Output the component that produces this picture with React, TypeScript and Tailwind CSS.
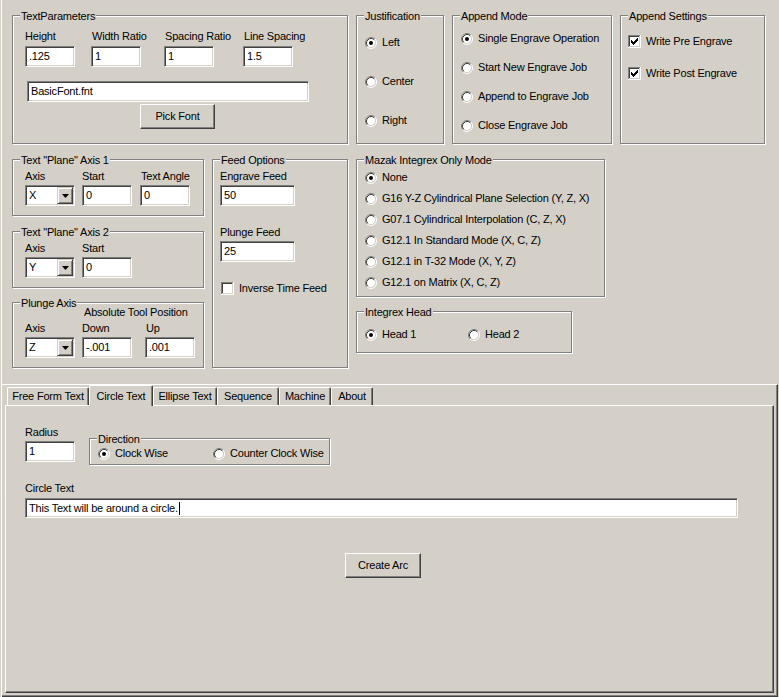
import React from "react";

function Radio({ checked }: { checked?: boolean }) {
  return (
    <svg width="12" height="12" viewBox="0 0 12 12" className="block shrink-0">
      <circle cx="6" cy="6" r="4.5" fill="#fff" />
      <path d="M2.11 9.89A5.5 5.5 0 0 1 9.89 2.11" fill="none" stroke="#808080" />
      <path d="M9.89 2.11A5.5 5.5 0 0 1 2.11 9.89" fill="none" stroke="#fff" />
      <path d="M2.82 9.18A4.5 4.5 0 0 1 9.18 2.82" fill="none" stroke="#404040" />
      <path d="M9.18 2.82A4.5 4.5 0 0 1 2.82 9.18" fill="none" stroke="#d4d0c8" />
      {checked && <circle cx="6" cy="6" r="2" fill="#000" />}
    </svg>
  );
}

function Check({ checked }: { checked?: boolean }) {
  const cols: [number, number][] = [
    [3, 5],
    [4, 6],
    [5, 7],
    [6, 6],
    [7, 5],
    [8, 4],
    [9, 3],
  ];
  return (
    <svg width="13" height="13" viewBox="0 0 13 13" className="block shrink-0" shapeRendering="crispEdges">
      <rect x="0" y="0" width="13" height="13" fill="#fff" />
      <rect x="0" y="0" width="12" height="1" fill="#808080" />
      <rect x="0" y="0" width="1" height="12" fill="#808080" />
      <rect x="1" y="1" width="10" height="1" fill="#404040" />
      <rect x="1" y="1" width="1" height="10" fill="#404040" />
      <rect x="1" y="11" width="11" height="1" fill="#d4d0c8" />
      <rect x="11" y="1" width="1" height="11" fill="#d4d0c8" />
      {checked &&
        cols.map(([x, y]) => <rect key={x} x={x} y={y} width="1" height="3" fill="#000" />)}
    </svg>
  );
}

function Edit({ className = "", children }: { className?: string; children?: React.ReactNode }) {
  return (
    <div
      className={`bg-white border border-t-[#808080] border-l-[#808080] border-b-white border-r-white shadow-[inset_1px_1px_0_#404040,inset_-1px_-1px_0_#d4d0c8] flex items-center pl-[3px] whitespace-nowrap overflow-hidden ${className}`}
    >
      {children}
    </div>
  );
}

function Combo({ value, className = "" }: { value: string; className?: string }) {
  return (
    <div
      className={`w-[50px] h-[21px] bg-white border border-t-[#808080] border-l-[#808080] border-b-white border-r-white shadow-[inset_1px_1px_0_#404040,inset_-1px_-1px_0_#d4d0c8] flex ${className}`}
    >
      <div className="flex-1 flex items-center pl-[3px]">{value}</div>
      <div className="w-[16px] my-[1px] mr-[1px] bg-[#d4d0c8] border border-t-[#d4d0c8] border-l-[#d4d0c8] border-r-[#404040] border-b-[#404040] shadow-[inset_1px_1px_0_#fff,inset_-1px_-1px_0_#808080] flex items-center justify-center">
        <svg width="7" height="4" viewBox="0 0 7 4" className="block">
          <path d="M0 0h7L3.5 4z" fill="#000" />
        </svg>
      </div>
    </div>
  );
}

function Btn({ className = "", children }: { className?: string; children?: React.ReactNode }) {
  return (
    <div
      className={`border border-t-white border-l-white border-r-[#404040] border-b-[#404040] shadow-[inset_-1px_-1px_0_#808080] flex items-center justify-center ${className}`}
    >
      {children}
    </div>
  );
}

function Group({
  label,
  className = "",
  children,
}: {
  label: string;
  className?: string;
  children?: React.ReactNode;
}) {
  return (
    <div className={`relative border border-[#808080] shadow-[inset_1px_1px_0_#fff,1px_1px_0_#fff] ${className}`}>
      <span className="absolute -top-[6px] left-[7px] bg-[#d4d0c8] px-[1px] whitespace-nowrap">{label}</span>
      {children}
    </div>
  );
}

function RadioRow({ checked, label, className = "" }: { checked?: boolean; label: string; className?: string }) {
  return (
    <div className={`flex items-center gap-[5px] h-[13px] whitespace-nowrap ${className}`}>
      <Radio checked={checked} />
      <span>{label}</span>
    </div>
  );
}

function CheckRow({ checked, label, className = "" }: { checked?: boolean; label: string; className?: string }) {
  return (
    <div className={`flex items-center gap-[5px] h-[13px] whitespace-nowrap ${className}`}>
      <Check checked={checked} />
      <span>{label}</span>
    </div>
  );
}

function Tab({ label, className = "", selected }: { label: string; className?: string; selected?: boolean }) {
  return (
    <div
      className={`border-t border-l border-r border-t-white border-l-white border-r-[#404040] shadow-[inset_-1px_0_0_#808080] rounded-t-[2px] flex items-center justify-center whitespace-nowrap ${
        selected ? "relative z-10 -mb-px h-[21px] bg-[#d4d0c8]" : "h-[18px]"
      } ${className}`}
    >
      {label}
    </div>
  );
}

export default function App() {
  return (
    <div className="w-[779px] h-[697px] bg-[#d4d0c8] overflow-hidden text-black font-['Liberation_Sans',Arial,sans-serif] text-[11px] leading-[13px] tracking-[-0.2px]">
      <div className="ml-[1px] h-full border-l border-l-white flex flex-col">
        <div className="h-[384px] shrink-0 pl-[10px] pt-[15px]">
          {/* Row 1 */}
          <div className="flex items-start gap-[8px]">
            <Group label="TextParameters" className="w-[336px] h-[129px] pl-[12px] pt-[14px]">
              <div className="flex">
                <div className="w-[66px]">
                  <div>Height</div>
                  <Edit className="w-[50px] h-[21px] mt-[3px]">.125</Edit>
                </div>
                <div className="w-[73px]">
                  <div className="pl-[1px]">Width Ratio</div>
                  <Edit className="w-[50px] h-[21px] mt-[3px]">1</Edit>
                </div>
                <div className="w-[79px]">
                  <div className="pl-[1px]">Spacing Ratio</div>
                  <Edit className="w-[50px] h-[21px] mt-[3px]">1</Edit>
                </div>
                <div>
                  <div className="pl-[1px]">Line Spacing</div>
                  <Edit className="w-[50px] h-[21px] mt-[3px]">1.5</Edit>
                </div>
              </div>
              <Edit className="w-[282px] h-[21px] mt-[14px] ml-[2px]">BasicFont.fnt</Edit>
              <Btn className="w-[75px] h-[25px] mt-[2px] ml-[115px]">Pick Font</Btn>
            </Group>

            <Group label="Justification" className="w-[88px] h-[129px] pl-[8px] pt-[20px] flex flex-col gap-[26px]">
              <RadioRow checked label="Left" />
              <RadioRow label="Center" />
              <RadioRow label="Right" />
            </Group>

            <Group label="Append Mode" className="w-[160px] h-[129px] pl-[8px] pt-[16px] flex flex-col gap-[16px]">
              <RadioRow checked label="Single Engrave Operation" />
              <RadioRow label="Start New Engrave Job" />
              <RadioRow label="Append to Engrave Job" />
              <RadioRow label="Close Engrave Job" />
            </Group>

            <Group label="Append Settings" className="w-[145px] h-[129px] pl-[7px] pt-[19px] flex flex-col gap-[19px]">
              <CheckRow checked label="Write Pre Engrave" />
              <CheckRow checked label="Write Post Engrave" />
            </Group>
          </div>

          {/* Row 2 */}
          <div className="flex items-start gap-[8px] mt-[15px]">
            <div className="w-[192px] flex flex-col">
              <Group label={'Text "Plane" Axis 1'} className="h-[57px] pl-[12px] pt-[10px]">
                <div className="flex">
                  <div className="w-[57px]">
                    <div>Axis</div>
                    <Combo value="X" className="mt-[2px]" />
                  </div>
                  <div className="w-[58px]">
                    <div>Start</div>
                    <Edit className="w-[50px] h-[21px] mt-[2px]">0</Edit>
                  </div>
                  <div>
                    <div className="pl-[1px]">Text Angle</div>
                    <Edit className="w-[50px] h-[21px] mt-[2px]">0</Edit>
                  </div>
                </div>
              </Group>

              <Group label={'Text "Plane" Axis 2'} className="mt-[15px] h-[57px] pl-[12px] pt-[10px]">
                <div className="flex">
                  <div className="w-[57px]">
                    <div>Axis</div>
                    <Combo value="Y" className="mt-[2px]" />
                  </div>
                  <div>
                    <div>Start</div>
                    <Edit className="w-[50px] h-[21px] mt-[2px]">0</Edit>
                  </div>
                </div>
              </Group>

              <Group label="Plunge Axis" className="mt-[14px] h-[66px] pl-[12px] pt-[3px]">
                <div className="ml-[59px]">Absolute Tool Position</div>
                <div className="flex mt-[3px]">
                  <div className="w-[57px]">
                    <div>Axis</div>
                    <Combo value="Z" className="mt-[2px]" />
                  </div>
                  <div className="w-[63px]">
                    <div>Down</div>
                    <Edit className="w-[50px] h-[21px] mt-[2px]">-.001</Edit>
                  </div>
                  <div>
                    <div className="pl-[1px]">Up</div>
                    <Edit className="w-[50px] h-[21px] mt-[2px]">.001</Edit>
                  </div>
                </div>
              </Group>
            </div>

            <Group label="Feed Options" className="w-[136px] h-[209px] pl-[7px] pt-[10px]">
              <div>Engrave Feed</div>
              <Edit className="w-[75px] h-[21px] mt-[2px]">50</Edit>
              <div className="mt-[20px]">Plunge Feed</div>
              <Edit className="w-[75px] h-[21px] mt-[2px]">25</Edit>
              <CheckRow label="Inverse Time Feed" className="mt-[20px] ml-[1px]" />
            </Group>

            <div className="flex flex-col">
              <Group label="Mazak Integrex Only Mode" className="w-[249px] h-[138px] pl-[8px] pt-[11px] flex flex-col gap-[8px]">
                <RadioRow checked label="None" />
                <RadioRow label="G16 Y-Z Cylindrical Plane Selection (Y, Z, X)" />
                <RadioRow label="G07.1 Cylindrical Interpolation (C, Z, X)" />
                <RadioRow label="G12.1 In Standard Mode (X, C, Z)" />
                <RadioRow label="G12.1 in T-32 Mode (X, Y, Z)" />
                <RadioRow label="G12.1 on Matrix (X, C, Z)" />
              </Group>
              <Group label="Integrex Head" className="mt-[14px] w-[216px] h-[42px] pl-[8px] pt-[16px] flex">
                <RadioRow checked label="Head 1" className="w-[103px]" />
                <RadioRow label="Head 2" />
              </Group>
            </div>
          </div>
        </div>

        {/* Tab control frame */}
        <div className="h-[313px] mr-[1px] shrink-0 border-t border-r border-b border-t-white border-r-[#404040] border-b-[#404040] shadow-[inset_-1px_-1px_0_#808080] flex flex-col">
          <div className="h-[20px] shrink-0 flex items-end pl-[5px]">
            <Tab label="Free Form Text" className="w-[82px]" />
            <Tab label="Circle Text" className="w-[64px]" selected />
            <Tab label="Ellipse Text" className="w-[64px]" />
            <Tab label="Sequence" className="w-[62px]" />
            <Tab label="Machine" className="w-[52px]" />
            <Tab label="About" className="w-[42px]" />
          </div>
          <div className="ml-[3px] mr-[3px] h-[288px] shrink-0 border border-t-white border-l-white border-r-[#404040] border-b-[#404040] shadow-[inset_-1px_-1px_0_#808080] pl-[19px] pt-[20px]">
            <div className="flex items-start">
              <div className="w-[50px]">
                <div>Radius</div>
                <Edit className="w-[50px] h-[21px] mt-[2px]">1</Edit>
              </div>
              <Group label="Direction" className="ml-[14px] mt-[12px] w-[241px] h-[27px] pl-[8px] pt-[8px] flex">
                <RadioRow checked label="Clock Wise" className="w-[115px]" />
                <RadioRow label="Counter Clock Wise" />
              </Group>
            </div>
            <div className="mt-[17px]">Circle Text</div>
            <Edit className="w-[713px] h-[20px] mt-[3px]">
              This Text will be around a circle.
              <span className="inline-block w-px h-[13px] bg-black ml-[1px]" />
            </Edit>
            <Btn className="w-[76px] h-[25px] mt-[35px] ml-[320px]">Create Arc</Btn>
          </div>
        </div>
      </div>
    </div>
  );
}
